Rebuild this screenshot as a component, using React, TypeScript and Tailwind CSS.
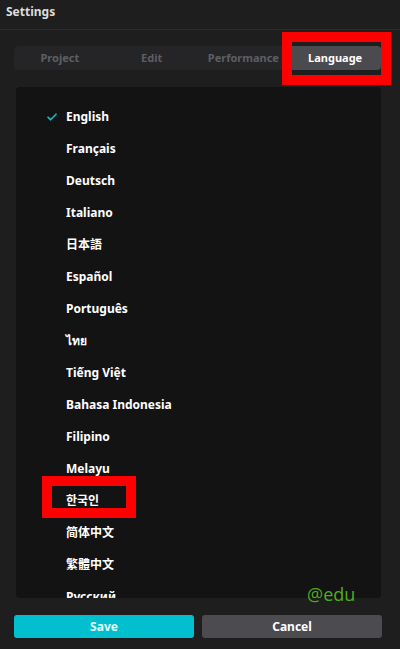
import React from 'react';

// ─── Language list ───────────────────────────────────────────────────────────
const LANGUAGES = [
  'English',
  'Français',
  'Deutsch',
  'Italiano',
  '日本語',
  'Español',
  'Português',
  'ไทย',
  'Tiếng Việt',
  'Bahasa Indonesia',
  'Filipino',
  'Melayu',
  '한국인',
  '简体中文',
  '繁體中文',
  'Русский',
];

const TABS = ['Project', 'Edit', 'Performance', 'Language'];

const FONT =
  "font-['Noto_Sans','Noto_Sans_CJK_SC','Noto_Sans_CJK_KR','Noto_Sans_CJK_JP',sans-serif]";

const App: React.FC = () => {
  const active = 'Language';
  const selected = 'English';

  return (
    <div className={`relative flex h-[649px] w-[400px] flex-col overflow-hidden bg-[#1e1e1f] ${FONT}`}>
      {/* Title */}
      <div className="flex h-[30px] items-start border-b border-[#2d2d2e] px-[6px] pt-[3px]">
        <span className="text-[12px] font-bold leading-[18px] text-[#dcdcdc]">Settings</span>
      </div>

      {/* Tabs */}
      <div className="mx-[14px] mt-[16px] flex h-[24px] w-[367px] rounded-[4px] bg-[#252527]">
        {TABS.map((tab) => (
          <div
            key={tab}
            className={`flex flex-1 items-center justify-center rounded-[4px] text-[11px] font-bold ${
              tab === active ? 'bg-[#4a4a4f] text-white' : 'text-[#5e5e63]'
            }`}
          >
            {tab}
          </div>
        ))}
      </div>

      <div className="ml-[16px] mt-[17px] h-[511px] w-[365px] overflow-hidden rounded-[4px] bg-[#131314] pt-[14px]">
        {LANGUAGES.map((lang) => (
          <div key={lang} className="flex h-[32px] items-center pl-[31px]">
            <span className="flex w-[19px] items-center">
              {lang === selected && (
                <svg width="10" height="8" viewBox="0 0 10 8" fill="none">
                  <path d="M1 4.2 3.7 6.8 9 1.2" stroke="#1fb5c2" strokeWidth="1.6" strokeLinecap="round" strokeLinejoin="round" />
                </svg>
              )}
            </span>
            <span className="text-[12px] font-bold leading-[16px] text-white">{lang}</span>
          </div>
        ))}
      </div>

      {/* Buttons */}
      <div className="mt-[17px] flex gap-[8px] px-[14px]">
        <button className="flex h-[23px] w-[180px] items-center justify-center rounded-[3px] bg-[#00c0cf] text-[12px] font-bold leading-none text-[#e8fbfd]">
          Save
        </button>
        <button className="flex h-[23px] w-[180px] items-center justify-center rounded-[3px] bg-[#4b4b50] text-[12px] font-bold leading-none text-white">
          Cancel
        </button>
      </div>

      {/* Watermark */}
      <span className="absolute left-[307px] top-[582px] font-['Open_Sans',sans-serif] text-[18px] leading-[24px] text-[#4fae1c]">
        @edu
      </span>

      {/* Annotation boxes */}
      <div className="absolute left-[282px] top-[32px] h-[53px] w-[109px] border-[10px] border-[#ff0000]" />
      <div className="absolute left-[42px] top-[476px] h-[42px] w-[94px] border-[10px] border-[#ff0000]" />
    </div>
  );
};

export default App;
